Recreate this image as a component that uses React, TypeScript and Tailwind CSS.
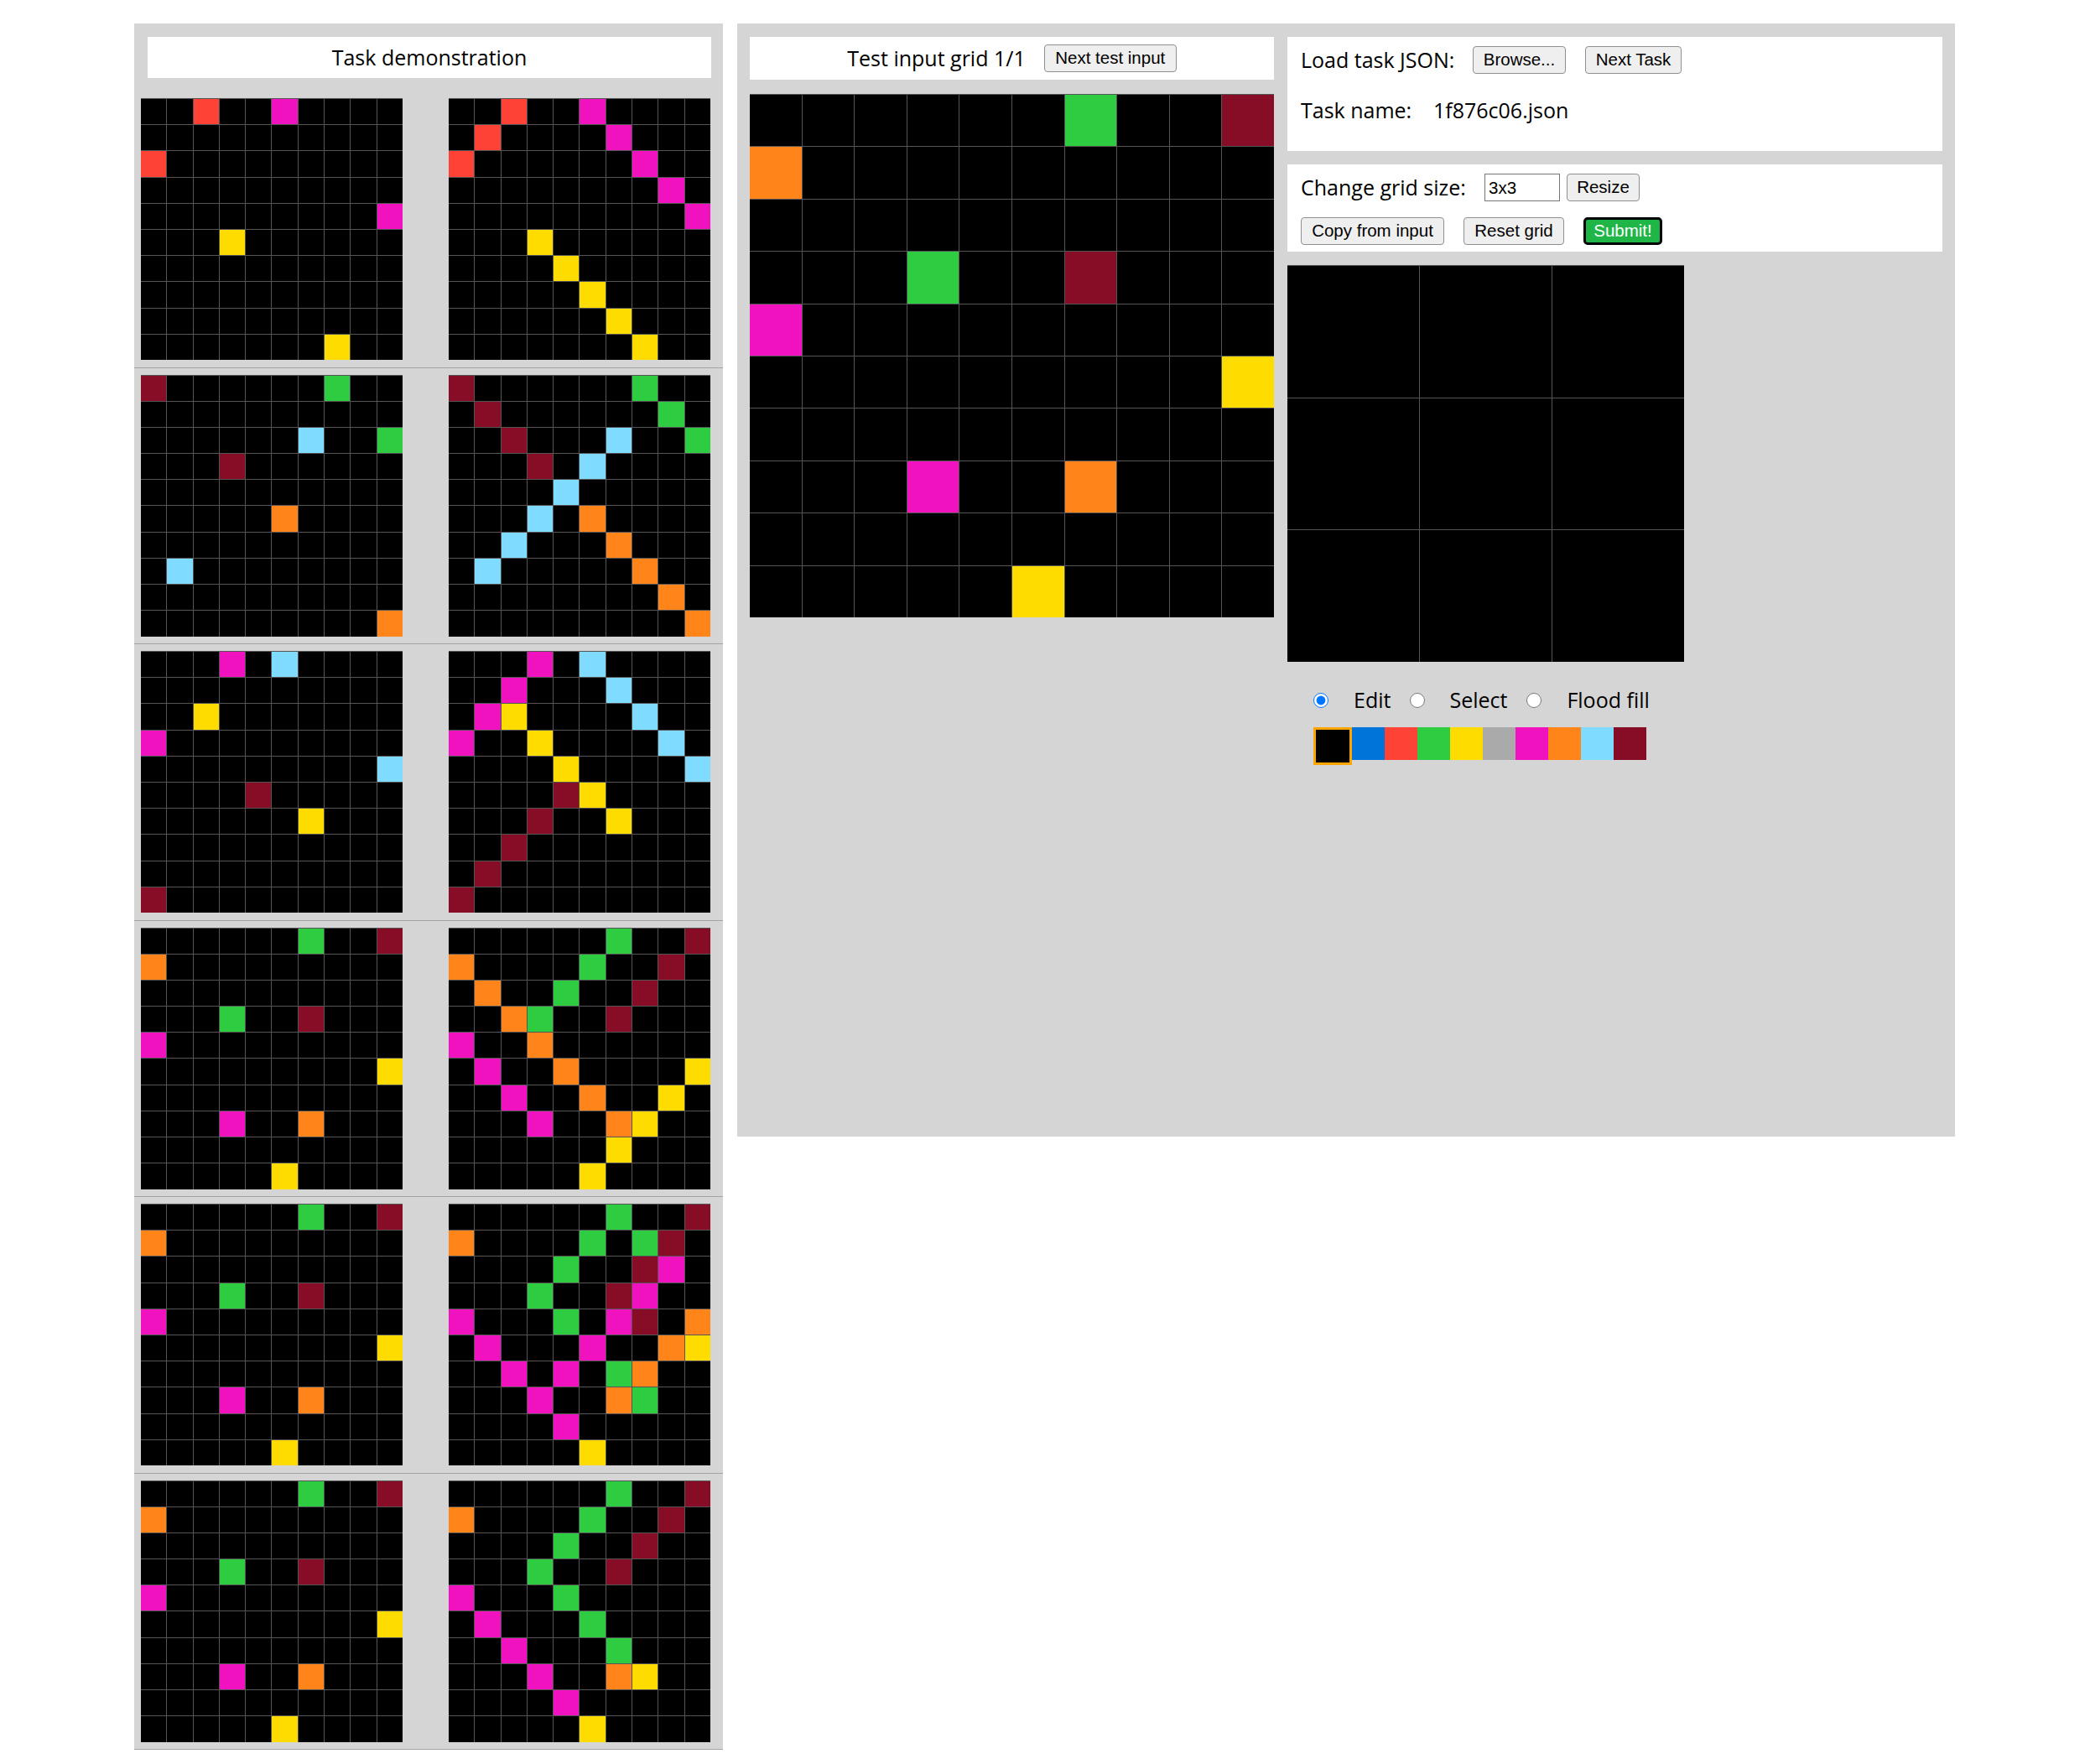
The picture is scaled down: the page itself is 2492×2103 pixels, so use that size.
import React from "react";

const COLORS: Record<string, string> = {
  "0": "#000000",
  "1": "#0074D9",
  "2": "#FF4136",
  "3": "#2ECC40",
  "4": "#FFDC00",
  "5": "#AAAAAA",
  "6": "#F012BE",
  "7": "#FF851B",
  "8": "#7FDBFF",
  "9": "#870C25",
};

const BLANK = "0000000000";

const testInput = [
  "0000003009",
  "7000000000",
  BLANK,
  "0003009000",
  "6000000000",
  "0000000004",
  BLANK,
  "0006007000",
  BLANK,
  "0000040000",
];

const pairs: { input: string[]; output: string[] }[] = [
  {
    input: ["0020060000", BLANK, "2000000000", BLANK, "0000000006", "0004000000", BLANK, BLANK, BLANK, "0000000400"],
    output: ["0020060000", "0200006000", "2000000600", "0000000060", "0000000006", "0004000000", "0000400000", "0000040000", "0000004000", "0000000400"],
  },
  {
    input: ["9000000300", BLANK, "0000008003", "0009000000", BLANK, "0000070000", BLANK, "0800000000", BLANK, "0000000007"],
    output: ["9000000300", "0900000030", "0090008003", "0009080000", "0000800000", "0008070000", "0080007000", "0800000700", "0000000070", "0000000007"],
  },
  {
    input: ["0006080000", BLANK, "0040000000", "6000000000", "0000000008", "0000900000", "0000004000", BLANK, BLANK, "9000000000"],
    output: ["0006080000", "0060008000", "0640000800", "6004000080", "0000400008", "0000940000", "0009004000", "0090000000", "0900000000", "9000000000"],
  },
  {
    input: testInput,
    output: ["0000003009", "7000030090", "0700300900", "0073009000", "6007000000", "0600700004", "0060070040", "0006007400", "0000004000", "0000040000"],
  },
  {
    input: testInput,
    output: ["0000003009", "7000030390", "0000300960", "0003009600", "6000306907", "0600060074", "0060603700", "0006007300", "0000600000", "0000040000"],
  },
  {
    input: testInput,
    output: ["0000003009", "7000030090", "0000300900", "0003009000", "6000300000", "0600030000", "0060003000", "0006007400", "0000600000", "0000040000"],
  },
];

function Grid({ rows, size, cols }: { rows: string[]; size: string; cols: string }) {
  return (
    <div className={`grid ${cols} gap-px bg-[#555] pt-px ${size}`}>
      {rows.flatMap((row, r) =>
        row.split("").map((v, c) => (
          <div key={`${r}-${c}`} style={{ backgroundColor: COLORS[v] }} />
        ))
      )}
    </div>
  );
}

function Btn({ children, className = "" }: { children: React.ReactNode; className?: string }) {
  return (
    <button
      className={`h-[33px] flex items-center justify-center bg-[#efefef] border border-[#8f8f8f] rounded-[4px] text-[20.5px] text-black font-['Liberation_Sans',Arial,sans-serif] ${className}`}
    >
      {children}
    </button>
  );
}

const palette = ["1", "2", "3", "4", "5", "6", "7", "8", "9"];

export default function App() {
  return (
    <div className="min-h-[2103px] bg-white font-['Open_Sans',sans-serif] text-black text-[25px]">
      <div className="flex items-start pt-[28px] pl-[160px] gap-[17px]">
        {/* demonstration panel */}
        <div className="w-[702px] bg-[#d5d5d5] pt-[16px]">
          <div className="ml-[16px] mr-[14px] h-[49px] bg-white flex items-center justify-center">
            Task demonstration
          </div>
          <div className="mt-[16px]">
            {pairs.map((p, i) => (
              <div key={i} className="flex gap-[55px] pl-[8px] pt-[8px] pb-[8.5px] border-b border-[#a3a3a3]">
                <Grid rows={p.input} size="w-[312px] h-[312px]" cols="grid-cols-10" />
                <Grid rows={p.output} size="w-[312px] h-[312px]" cols="grid-cols-10" />
              </div>
            ))}
          </div>
        </div>

        {/* workspace */}
        <div className="w-[1452px] h-[1327px] bg-[#d5d5d5] flex gap-[16px] pl-[15px] pt-[16px]">
          <div className="w-[625px]">
            <div className="h-[51px] bg-white flex items-center justify-center gap-[22px]">
              <span>Test input grid 1/1</span>
              <Btn className="w-[158px]">Next test input</Btn>
            </div>
            <div className="mt-[17px]">
              <Grid rows={testInput} size="w-[625px] h-[624px]" cols="grid-cols-10" />
            </div>
          </div>

          <div className="w-[781px]">
            <div className="h-[136px] bg-white pl-[16px] pt-[11px]">
              <div className="flex items-center h-[33px]">
                <span className="w-[205px]">Load task JSON:</span>
                <Btn className="w-[111px]">Browse...</Btn>
                <Btn className="w-[115px] ml-[23px]">Next Task</Btn>
              </div>
              <div className="flex items-center h-[33px] mt-[27px]">
                <span className="w-[158px]">Task name:</span>
                <span>1f876c06.json</span>
              </div>
            </div>

            <div className="h-[104px] bg-white mt-[16px] pl-[16px] pt-[11px]">
              <div className="flex items-center h-[33px]">
                <span className="w-[219px]">Change grid size:</span>
                <input
                  defaultValue="3x3"
                  className="w-[90px] h-[33px] border border-[#767676] bg-white pl-[4px] text-[20.5px] font-['Liberation_Sans',Arial,sans-serif] outline-none"
                />
                <Btn className="w-[87px] ml-[8px]">Resize</Btn>
              </div>
              <div className="flex items-center h-[33px] mt-[19px]">
                <Btn className="w-[171px]">Copy from input</Btn>
                <Btn className="w-[120px] ml-[23px]">Reset grid</Btn>
                <button className="w-[94px] h-[33px] ml-[23px] flex items-center justify-center bg-[#1fb647] border-[3px] border-black rounded-[5px] text-[20.5px] text-white font-['Liberation_Sans',Arial,sans-serif]">
                  Submit!
                </button>
              </div>
            </div>

            <div className="mt-[16px]">
              <Grid
                rows={["000", "000", "000"]}
                size="w-[473px] h-[473px]"
                cols="grid-cols-3"
              />
            </div>

            <div className="mt-[29px] h-[33px] flex items-center pl-[31px]">
              <input type="radio" name="tool" defaultChecked className="w-[18px] h-[18px] m-0" />
              <span className="ml-[30px]">Edit</span>
              <input type="radio" name="tool" className="w-[18px] h-[18px] m-0 ml-[23px]" />
              <span className="ml-[29px]">Select</span>
              <input type="radio" name="tool" className="w-[18px] h-[18px] m-0 ml-[23px]" />
              <span className="ml-[30px]">Flood fill</span>
            </div>

            <div className="mt-[16px] pl-[31px] flex items-start">
              <div className="w-[46px] h-[45px] border-[3px] border-[#ffa500] bg-black" />
              {palette.map((c) => (
                <div key={c} className="w-[39px] h-[39px]" style={{ backgroundColor: COLORS[c] }} />
              ))}
            </div>
          </div>
        </div>
      </div>
    </div>
  );
}
